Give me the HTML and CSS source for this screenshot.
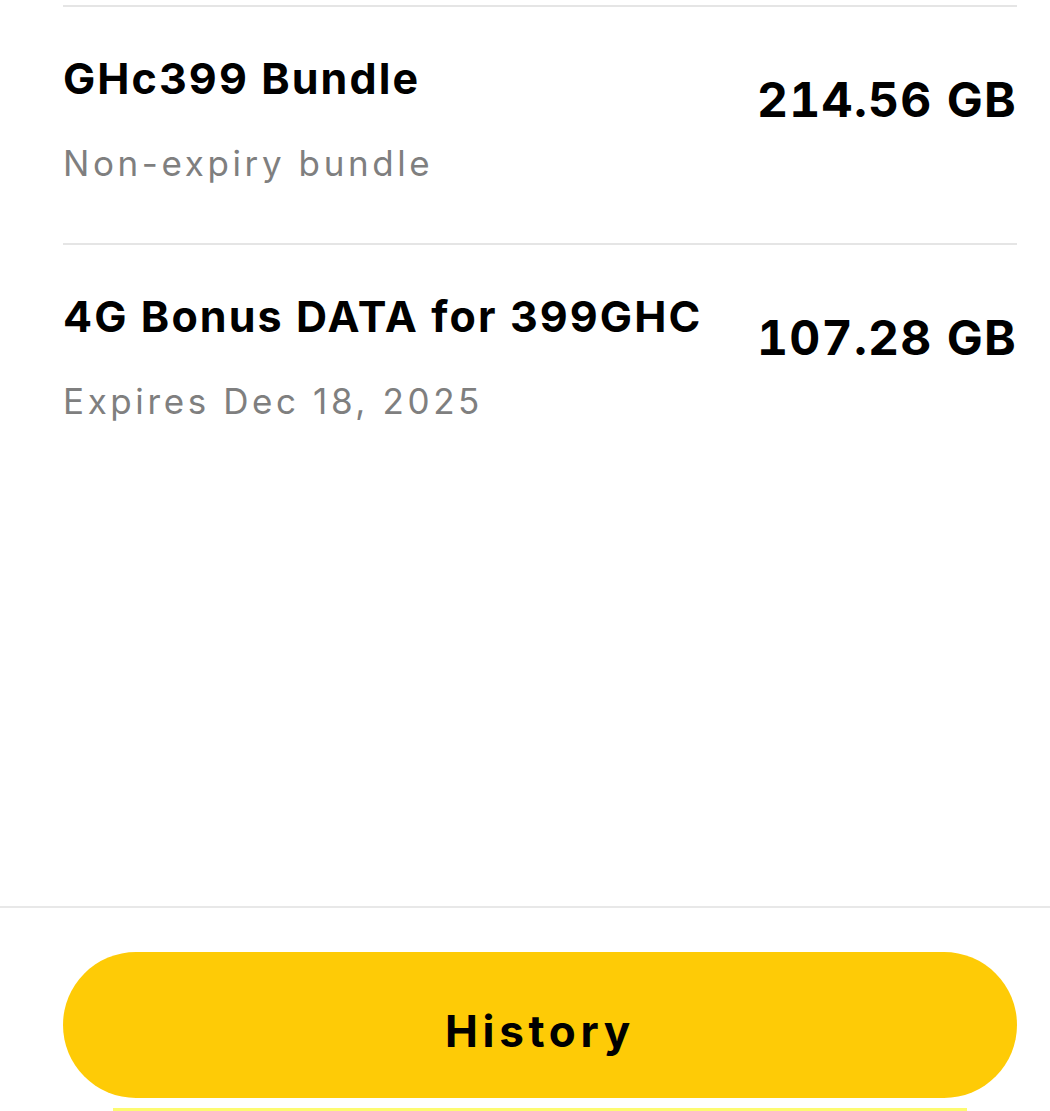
FILE: index.html
```html
<!DOCTYPE html>
<html lang="en">
<head>
<meta charset="utf-8">
<title>Data bundles</title>
<link rel="stylesheet" href="styles.css">
</head>
<body>
<div class="app">
  <div class="list">
    <div class="item">
      <div class="info">
        <div class="title">GHc399 Bundle</div>
        <div class="sub">Non-expiry bundle</div>
      </div>
      <div class="amount">214.56 GB</div>
    </div>
    <div class="item">
      <div class="info">
        <div class="title">4G Bonus DATA for 399GHC</div>
        <div class="sub">Expires Dec 18, 2025</div>
      </div>
      <div class="amount">107.28 GB</div>
    </div>
  </div>
  <div class="footer">
    <button class="history">History</button>
    <div class="peek"></div>
  </div>
</div>
</body>
</html>
```
FILE: styles.css
```css
html, body {
  margin: 0;
  padding: 0;
  background: #ffffff;
}
body {
  font-family: "Inter", "Liberation Sans", sans-serif;
  color: #000;
  overflow: hidden;
}
.app {
  height: 1111px;
  display: flex;
  flex-direction: column;
}
.list {
  flex: 1;
  padding: 5px 33px 0 63px;
}
.item {
  border-top: 2px solid #e5e5e5;
  display: flex;
  justify-content: space-between;
  align-items: flex-start;
  padding: 45px 0 58px;
}
.info {
  display: flex;
  flex-direction: column;
  gap: 37px;
}
.title {
  font-size: 43px;
  line-height: 52px;
  font-weight: 700;
  letter-spacing: 2.1px;
}
.sub {
  font-size: 35px;
  line-height: 44px;
  color: #7f7f7f;
  letter-spacing: 3.6px;
}
.amount {
  margin-top: 19px;
  font-size: 48px;
  line-height: 58px;
  font-weight: 700;
  letter-spacing: 1.25px;
  font-variant-numeric: tabular-nums;
}
.footer {
  border-top: 2px solid #e8e8e8;
  padding: 44px 33px 0 63px;
  display: flex;
  flex-direction: column;
  align-items: stretch;
  gap: 10px;
}
.history {
  height: 146px;
  border: none;
  border-radius: 73px;
  background: #fecb06;
  font-family: inherit;
  font-size: 44px;
  line-height: 44px;
  font-weight: 700;
  letter-spacing: 4.7px;
  color: #000;
  padding: 12px 0 0;
  display: flex;
  align-items: center;
  justify-content: center;
}
.peek {
  height: 3px;
  margin: 0 50px;
  background: #fdfb70;
}
```
